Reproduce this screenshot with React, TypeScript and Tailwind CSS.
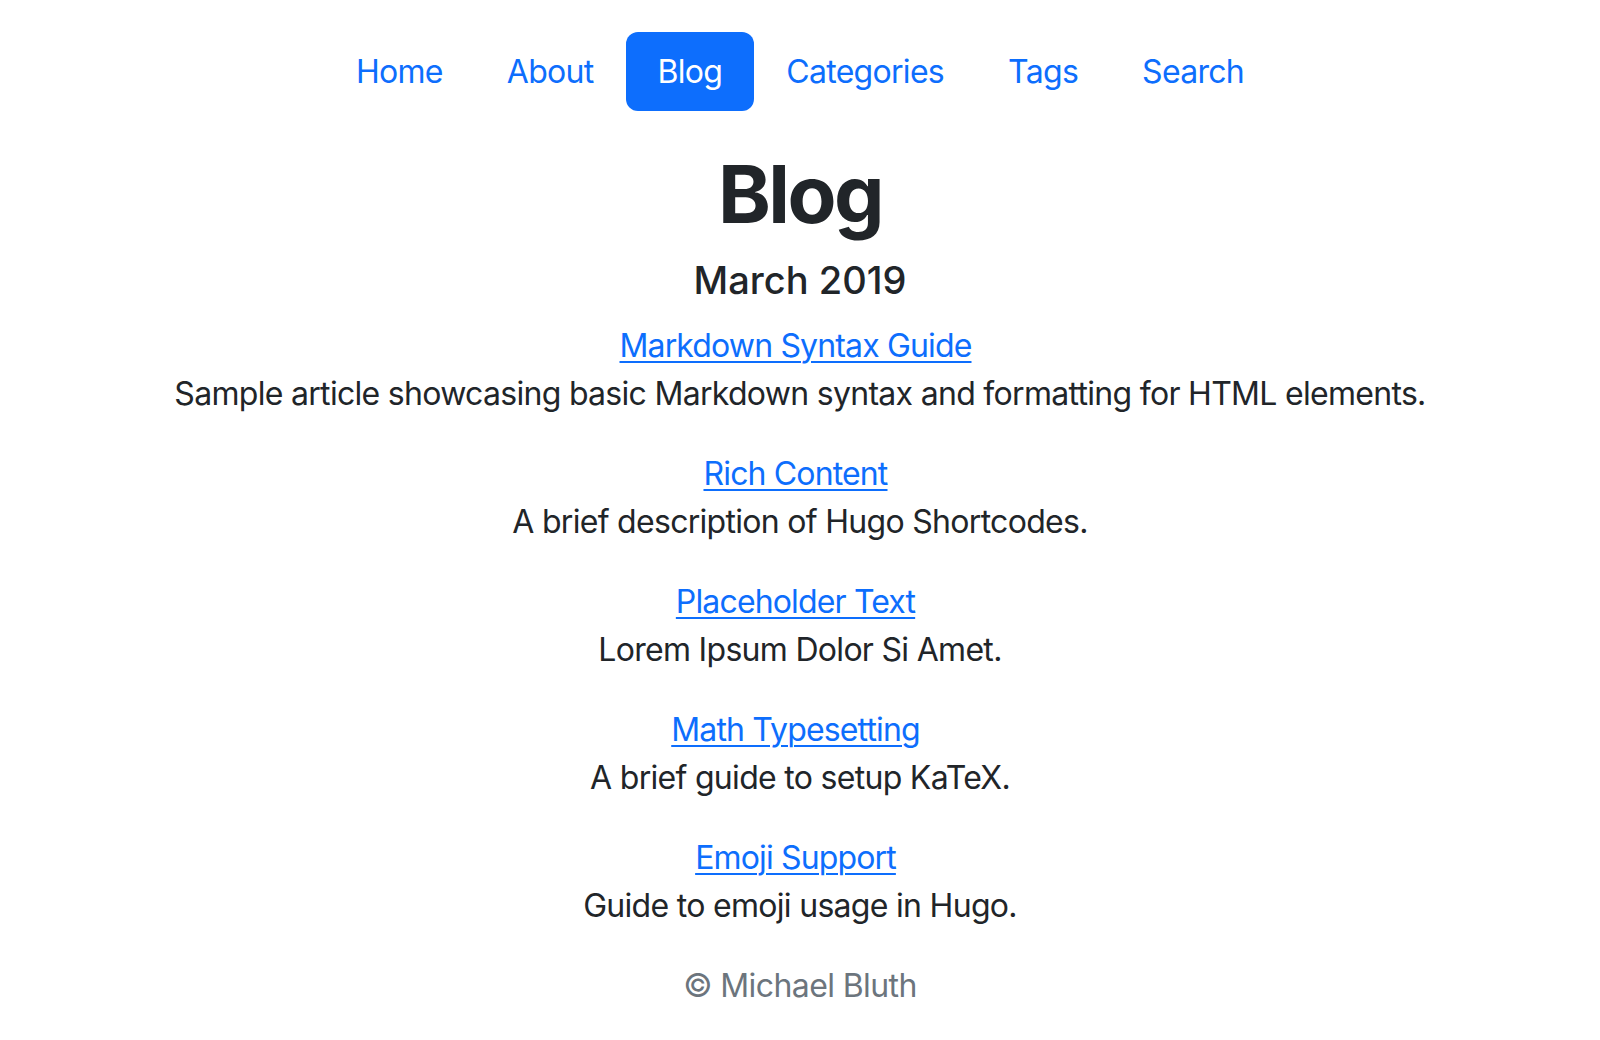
import React from "react";

const navItems = ["Home", "About", "Blog", "Categories", "Tags", "Search"];

const posts = [
  { title: "Markdown Syntax Guide", desc: "Sample article showcasing basic Markdown syntax and formatting for HTML elements." },
  { title: "Rich Content", desc: "A brief description of Hugo Shortcodes." },
  { title: "Placeholder Text", desc: "Lorem Ipsum Dolor Si Amet." },
  { title: "Math Typesetting", desc: "A brief guide to setup KaTeX." },
  { title: "Emoji Support", desc: "Guide to emoji usage in Hugo." },
];

export default function App() {
  return (
    <div className="min-h-[1040px] w-[1600px] bg-white text-[#212529] text-center font-['Inter','Noto_Sans',sans-serif] text-[32px] leading-[48px] tracking-[-0.7px]">
      <nav className="flex justify-center pt-[32px]">
        {navItems.map((item) => (
          <a
            key={item}
            className={
              item === "Blog"
                ? "block rounded-[12px] bg-[#0d6efd] px-[32px] py-[15px] leading-[49px] text-white"
                : "block px-[32px] py-[15px] leading-[49px] text-[#0d6efd]"
            }
          >
            {item}
          </a>
        ))}
      </nav>
      <main className="pt-[35px]">
        <h1 className="mb-[16px] text-[80px] font-bold leading-[96px] tracking-[-2.5px]">Blog</h1>
        <h2 className="mb-[20px] text-[38px] font-medium leading-[44px] tracking-normal">March 2019</h2>
        {posts.map((p) => (
          <div key={p.title} className="mb-[32px]">
            <a className="mr-[9px] text-[#0d6efd] underline underline-offset-[4px] decoration-[2px] tracking-[-0.85px]">{p.title}</a>
            <p>{p.desc}</p>
          </div>
        ))}
        <footer className="text-[#6c757d] tracking-[-0.6px]">© Michael Bluth</footer>
      </main>
    </div>
  );
}
